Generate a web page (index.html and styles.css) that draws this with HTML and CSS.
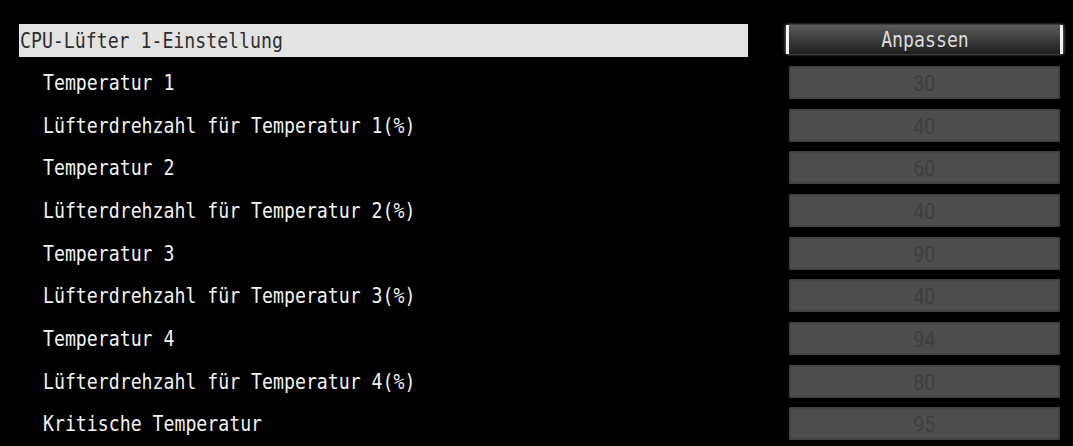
FILE: index.html
```html
<!DOCTYPE html>
<html lang="de">
<head>
<meta charset="utf-8">
<title>CPU-Lüfter 1-Einstellung</title>
<link rel="stylesheet" href="styles.css">
</head>
<body>
<div class="list">
  <div class="row">
    <div class="label header"><span class="txt">CPU-Lüfter 1-Einstellung</span></div>
    <div class="value"><div class="button"><span class="txt">Anpassen</span></div></div>
  </div>
  <div class="row">
    <div class="label sub"><span class="txt">Temperatur 1</span></div>
    <div class="value"><div class="box"><span class="num">30</span></div></div>
  </div>
  <div class="row">
    <div class="label sub"><span class="txt">Lüfterdrehzahl für Temperatur 1(%)</span></div>
    <div class="value"><div class="box"><span class="num">40</span></div></div>
  </div>
  <div class="row">
    <div class="label sub"><span class="txt">Temperatur 2</span></div>
    <div class="value"><div class="box"><span class="num">60</span></div></div>
  </div>
  <div class="row">
    <div class="label sub"><span class="txt">Lüfterdrehzahl für Temperatur 2(%)</span></div>
    <div class="value"><div class="box"><span class="num">40</span></div></div>
  </div>
  <div class="row">
    <div class="label sub"><span class="txt">Temperatur 3</span></div>
    <div class="value"><div class="box"><span class="num">90</span></div></div>
  </div>
  <div class="row">
    <div class="label sub"><span class="txt">Lüfterdrehzahl für Temperatur 3(%)</span></div>
    <div class="value"><div class="box"><span class="num">40</span></div></div>
  </div>
  <div class="row">
    <div class="label sub"><span class="txt">Temperatur 4</span></div>
    <div class="value"><div class="box"><span class="num">94</span></div></div>
  </div>
  <div class="row">
    <div class="label sub"><span class="txt">Lüfterdrehzahl für Temperatur 4(%)</span></div>
    <div class="value"><div class="box"><span class="num">80</span></div></div>
  </div>
  <div class="row">
    <div class="label sub"><span class="txt">Kritische Temperatur</span></div>
    <div class="value"><div class="box"><span class="num">95</span></div></div>
  </div>
</div>
</body>
</html>
```
FILE: styles.css
```css
html, body {
  margin: 0;
  padding: 0;
  background: #000;
  height: 100%;
  overflow: hidden;
}

.list {
  padding: 18.7px 0 0 19px;
  display: flex;
  flex-direction: column;
}

.row {
  display: grid;
  grid-template-columns: 729px 277px;
  column-gap: 38px;
  height: 42.65px;
  align-items: center;
}

.label {
  height: 33px;
  display: flex;
  align-items: center;
  overflow: visible;
  white-space: nowrap;
}

.txt {
  display: inline-block;
  font-family: "DejaVu Sans Mono", "Liberation Mono", monospace;
  font-size: 22px;
  line-height: 33px;
  transform: scaleX(0.827);
  transform-origin: left center;
}

.header {
  background: #e3e3e3;
  color: #2e2e2e;
  padding-left: 1px;
}

.sub {
  color: #f2f2f2;
  padding-left: 24px;
}

.value {
  height: 33px;
  display: flex;
  align-items: center;
}

.button {
  box-sizing: border-box;
  width: 100%;
  height: 29px;
  margin-top: -1px;
  background: linear-gradient(to bottom, #5c5c5c 0%, #3c3c3c 50%, #1e1e1e 100%);
  border-left: 3px solid #f4f4f4;
  border-right: 3px solid #f4f4f4;
  box-shadow: -1px 0 3px rgba(255,255,255,0.35), 1px 0 3px rgba(255,255,255,0.35);
  display: flex;
  align-items: center;
  justify-content: center;
  color: #dcdcdc;
}

.button .txt {
  line-height: 29px;
  transform-origin: center center;
}

.box {
  box-sizing: border-box;
  width: 271px;
  height: 33px;
  margin-left: 3px;
  background: #4d4d4d;
  box-shadow: inset 0 0 2px 1px #3a3a3a;
  display: flex;
  align-items: center;
  justify-content: center;
}

.num {
  font-family: Roboto, "Liberation Sans", sans-serif;
  font-size: 22px;
  line-height: 33px;
  color: #3f3f3f;
  display: inline-block;
  transform: scaleX(0.9);
  padding-top: 2px;
}
```
